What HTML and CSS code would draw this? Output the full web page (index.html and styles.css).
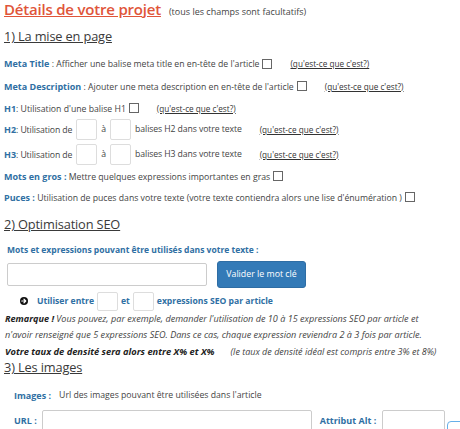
FILE: index.html
```html
<!DOCTYPE html>
<html lang="fr">
<head>
<meta charset="utf-8">
<link rel="stylesheet" href="styles.css">
</head>
<body>
<div class="page">
  <div class="title-row">
    <span class="title">Détails de votre projet</span>
    <span class="note">(tous les champs sont facultatifs)</span>
  </div>

  <h2 class="section s1">1) La mise en page</h2>

  <div class="row r-meta">
    <span><b class="lbl">Meta Title</b><span class="txt"> : Afficher une balise meta title en en-tête de l'article</span></span>
    <span class="cb"></span>
    <a class="help">(qu'est-ce que c'est?)</a>
  </div>
  <div class="row r-desc">
    <span><b class="lbl">Meta Description</b><span class="txt"> : Ajouter une meta description en en-tête de l'article</span></span>
    <span class="cb"></span>
    <a class="help">(qu'est-ce que c'est?)</a>
  </div>
  <div class="row r-h1">
    <span><b class="lbl">H1</b><span class="txt">: Utilisation d'une balise H1</span></span>
    <span class="cb"></span>
    <a class="help">(qu'est-ce que c'est?)</a>
  </div>
  <div class="row r-h2">
    <span><b class="lbl">H2</b><span class="txt">: Utilisation de</span></span>
    <span class="num"></span>
    <span>à</span>
    <span class="num"></span>
    <span class="txt">balises H2 dans votre texte</span>
    <a class="help">(qu'est-ce que c'est?)</a>
  </div>
  <div class="row r-h3">
    <span><b class="lbl">H3</b><span class="txt">: Utilisation de</span></span>
    <span class="num"></span>
    <span>à</span>
    <span class="num"></span>
    <span class="txt">balises H3 dans votre texte</span>
    <a class="help">(qu'est-ce que c'est?)</a>
  </div>
  <div class="row r-gros">
    <span><b class="lbl">Mots en gros :</b><span class="txt"> Mettre quelques expressions importantes en gras</span></span>
    <span class="cb"></span>
  </div>
  <div class="row r-puces">
    <span><b class="lbl">Puces :</b><span class="txt"> Utilisation de puces dans votre texte (votre texte contiendra alors une lise d'énumération )</span></span>
    <span class="cb"></span>
  </div>

  <h2 class="section s2">2) Optimisation SEO</h2>

  <div class="kw-label"><b class="lbl">Mots et expressions pouvant être utilisés dans votre texte :</b></div>
  <div class="kw-row">
    <span class="text-input kw-input"></span>
    <span class="btn">Valider le mot clé</span>
  </div>
  <div class="row r-use">
    <svg class="arrow" viewBox="0 0 16 16" width="8" height="8"><circle cx="8" cy="8" r="8" fill="#111"/><path d="M3.5 8 H11 M8 4.5 L11.5 8 L8 11.5" stroke="#fff" stroke-width="2.4" fill="none" stroke-linecap="round" stroke-linejoin="round"/></svg>
    <b class="lbl">Utiliser entre</b>
    <span class="num small"></span>
    <b class="lbl">et</b>
    <span class="num small"></span>
    <b class="lbl">expressions SEO par article</b>
  </div>
  <p class="remark"><b>Remarque !</b> Vous pouvez, par exemple, demander l'utilisation de 10 à 15 expressions SEO par article et<br>n'avoir renseigné que 5 expressions SEO. Dans ce cas, chaque expression reviendra 2 à 3 fois par article.</p>
  <div class="density">
    <b>Votre taux de densité sera alors entre X% et X%</b>
    <span class="ideal">(le taux de densité idéal est compris entre 3% et 8%)</span>
  </div>

  <h2 class="section s3">3) Les images</h2>

  <div class="row r-img">
    <b class="lbl">Images :</b>
    <span>Url des images pouvant être utilisées dans l'article</span>
  </div>
  <div class="url-row">
    <b class="lbl url">URL :</b>
    <span class="text-input url-input"></span>
    <b class="lbl alt">Attribut Alt :</b>
    <span class="text-input alt-input"></span>
    <span class="focus-box"></span>
  </div>
</div>
</body>
</html>
```
FILE: styles.css
```css
html, body {
  margin: 0;
  padding: 0;
  background: #fff;
}
body {
  font-family: "Open Sans", "DejaVu Sans", sans-serif;
  font-size: 8.7px;
  color: #444;
  overflow: hidden;
  width: 460px;
  height: 429px;
}
.page {
  padding: 0 4px;
}
.title-row {
  display: flex;
  align-items: baseline;
  gap: 8px;
  height: 22px;
  line-height: 19px;
  white-space: nowrap;
}
.title {
  font-size: 15px;
  font-weight: 600;
  color: #e0553a;
  text-decoration: underline;
  letter-spacing: -0.2px;
}
.note {
  font-size: 9px;
  color: #444;
}
.section {
  margin: 0;
  font-size: 12.8px;
  font-weight: 400;
  color: #3a3a3a;
  text-decoration: underline;
  letter-spacing: -0.15px;
  white-space: nowrap;
}
.s1 { height: 30px; line-height: 28px; }
.s2 { height: 32px; line-height: 28px; margin-top: 3px; }
.s3 { height: 18px; line-height: 16px; }
.lbl {
  color: #2f6fa3;
  font-weight: 700;
  font-size: 9px;
}
.row {
  display: flex;
  align-items: center;
  height: 22px;
  white-space: nowrap;
}
.r-meta { height: 23px; }
.r-h2 .txt, .r-h3 .txt { letter-spacing: -0.1px; }
.r-h2 { height: 20px; }
.r-h3 { margin-top: 5px; height: 20px; }
.r-gros { margin-top: 1px; height: 22px; }
.r-puces { height: 20px; }
.cb {
  display: inline-block;
  flex-shrink: 0;
  width: 8px;
  height: 8px;
  border: 1px solid #666;
  margin-left: 3px;
  background: #fff;
}
.help {
  color: #333;
  text-decoration: underline;
  font-size: 8.2px;
  margin-left: 18px;
}
.num {
  display: inline-block;
  flex-shrink: 0;
  width: 19px;
  height: 19px;
  border: 1px solid #ddd;
  border-radius: 2px;
  margin: 0 4px;
}
.kw-label {
  padding-left: 3px;
  height: 16px;
  line-height: 16px;
}
.kw-label .lbl { font-size: 8.5px; }
.kw-row {
  display: flex;
  align-items: center;
  gap: 10px;
  padding-left: 3px;
  height: 32px;
}
.text-input {
  display: inline-block;
  flex-shrink: 0;
  border: 1px solid #ccc;
  border-radius: 2px;
  background: #fff;
  box-sizing: border-box;
}
.kw-input {
  width: 200px;
  height: 23px;
}
.btn {
  display: inline-flex;
  align-items: center;
  justify-content: center;
  width: 89px;
  height: 27px;
  background: #337ab7;
  border: 1px solid #2e6da4;
  border-radius: 3px;
  color: #fff;
  font-size: 8.8px;
  box-sizing: border-box;
}
.r-use {
  padding-left: 16px;
  height: 20px;
  margin-top: 1px;
}
.r-use .lbl { font-size: 8.6px; }
.r-use .num { margin: 0 3px; }
.arrow { margin-right: 9px; flex-shrink: 0; }
.num.small { height: 17px; }
.remark {
  margin: 0;
  font-size: 9.1px;
  font-style: italic;
  line-height: 16px;
  padding-left: 1px;
  white-space: nowrap;
}
.remark b { color: #222; }
.density {
  display: flex;
  align-items: center;
  height: 16px;
  font-style: italic;
  padding-left: 1px;
  white-space: nowrap;
}
.density b { color: #222; font-size: 9.3px; }
.ideal { margin-left: 16px; font-size: 9px; }
.r-img {
  padding-left: 10px;
  height: 30px;
  margin-top: 3px;
  gap: 8px;
}
.url-row {
  display: flex;
  align-items: flex-start;
  padding-left: 10px;
  height: 20px;
  white-space: nowrap;
}
.url-row .lbl { margin-top: 4px; flex-shrink: 0; }
.url-input {
  width: 270px;
  height: 24px;
  margin-left: 5px;
}
.alt { margin-left: 8px; }
.alt-input {
  width: 63px;
  height: 24px;
  margin-left: 6px;
}
.focus-box {
  display: inline-block;
  flex-shrink: 0;
  width: 16px;
  height: 20px;
  margin-left: 2px;
  margin-top: 11px;
  border: 1px solid #66afe9;
  border-radius: 4px;
}
```
